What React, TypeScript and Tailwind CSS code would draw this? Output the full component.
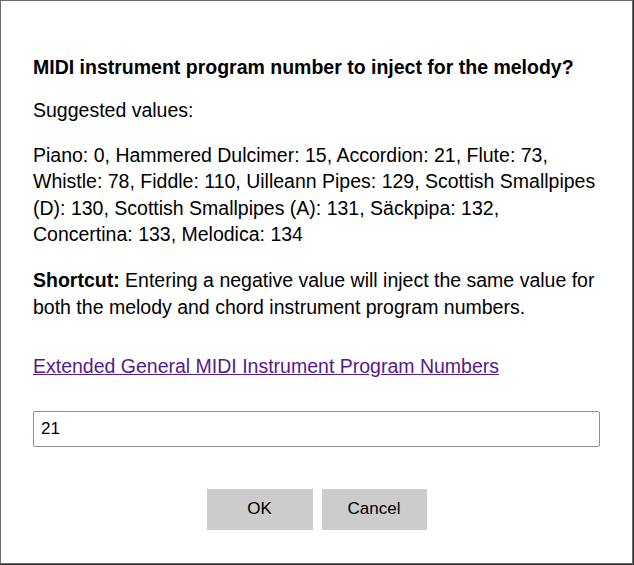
export default function App() {
  return (
    <div className="h-[565px] w-[634px] bg-[#2e2e2e] font-['Liberation_Sans',Arial,sans-serif] text-black">
      <div className="flex h-[564px] w-[633px] flex-col border border-[#6b6b6b] bg-white px-[32px] pt-[53px] text-[19.5px] leading-[26.4px]">
        <p className="font-bold">MIDI instrument program number to inject for the melody?</p>
        <p className="mt-[17px]">Suggested values:</p>
        <p className="mt-[18px]">
          Piano: 0, Hammered Dulcimer: 15, Accordion: 21, Flute: 73, Whistle: 78, Fiddle: 110, Uilleann Pipes: 129,
          Scottish Smallpipes (D): 130, Scottish Smallpipes (A): 131, Säckpipa: 132, Concertina: 133, Melodica: 134
        </p>
        <p className="mt-[20px]">
          <span className="font-bold">Shortcut:</span> Entering a negative value will inject the same value for both
          the melody and chord instrument program numbers.
        </p>
        <p className="mt-[33px]">
          <a href="#" className="text-[#551a8b] underline">
            Extended General MIDI Instrument Program Numbers
          </a>
        </p>
        <input
          defaultValue="21"
          className="mt-[31px] h-[36px] w-full rounded-[2px] border border-[#8f8f8f] px-[7px] text-[17px] outline-none"
        />
        <div className="mt-[42px] flex justify-center gap-[9px]">
          <button className="h-[41px] w-[106px] bg-[#cccccc] text-[17px]">OK</button>
          <button className="h-[41px] w-[105px] bg-[#cccccc] text-[17px]">Cancel</button>
        </div>
      </div>
    </div>
  );
}
